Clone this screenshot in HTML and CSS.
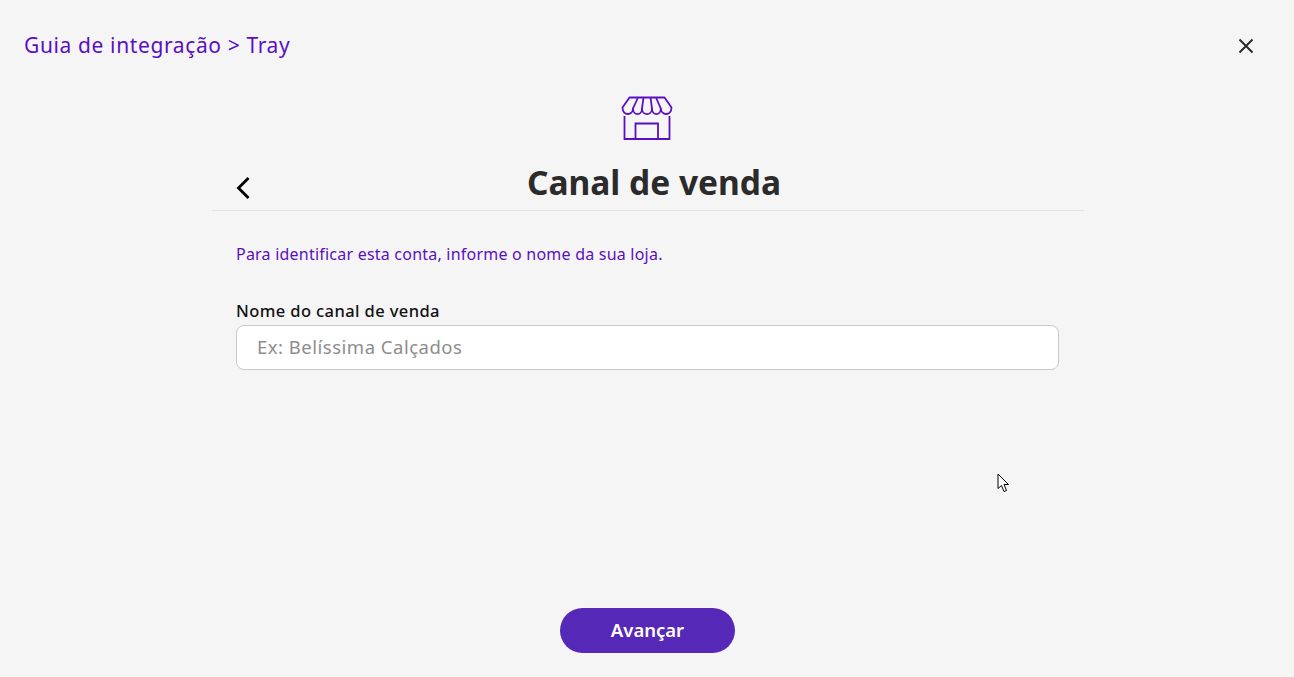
FILE: index.html
```html
<!DOCTYPE html>
<html lang="pt-BR">
<head>
<meta charset="utf-8">
<title>Guia de integração</title>
<link rel="stylesheet" href="styles.css">
</head>
<body>
<div class="page">
  <header class="top">
    <span class="crumb">Guia de integração &gt; Tray</span>
    <button class="close" aria-label="Fechar">
      <svg width="16" height="16" viewBox="0 0 16 16"><path d="M1.5 1.5l13 13M14.5 1.5l-13 13" fill="none" stroke="#2b2b2b" stroke-width="2"/></svg>
    </button>
  </header>
  <main class="panel">
    <div class="store">
      <svg width="52" height="46" viewBox="0 0 52 46" fill="none" stroke="#5a0fc0" stroke-width="1.800">
        <path d="M8.500 1.500H43.500L50.500 11.500C50.500 20 40 20 39.800 12.500C39.800 20 31 20 31 12.500C31 20 21 20 21 12.500C21 20 12 20 12 12.500C12 20 1.500 20 1.500 11.500Z" stroke-linejoin="round"/>
        <path d="M12 12.500L17 1.500M21 12.500L22.500 1.500M31 12.500L29.500 1.500M39.800 12.500L35 1.500"/>
        <path d="M3.500 20V43H48.500V20"/>
        <path d="M14.500 43V27.500H37V43"/>
      </svg>
    </div>
    <div class="title-row">
      <button class="back" aria-label="Voltar">
        <svg width="14" height="24" viewBox="0 0 14 24"><path d="M12.500 2L2.500 12L12.500 22" fill="none" stroke="#000" stroke-width="2.800"/></svg>
      </button>
      <h1>Canal de venda</h1>
    </div>
    <div class="body">
      <p class="intro">Para identificar esta conta, informe o nome da sua loja.</p>
      <label class="label" for="canal">Nome do canal de venda</label>
      <input class="field" id="canal" type="text" placeholder="Ex: Belíssima Calçados">
    </div>
  </main>
  <footer class="actions">
    <button class="next">Avançar</button>
  </footer>
  <svg class="cursor" width="13" height="20" viewBox="0 0 13 20"><path d="M1 1V15.500L4.500 12.500L7 18.500L9.500 17.500L7 11.500H11.500Z" fill="#fff" stroke="#000" stroke-width="1"/></svg>
</div>
</body>
</html>
```
FILE: styles.css
```css
* { box-sizing: border-box; }
html, body { margin: 0; height: 100%; }
body { background: #f5f5f5; font-family: "Noto Sans", "Open Sans", sans-serif; overflow: hidden; }
button { border: 0; background: none; padding: 0; font-family: inherit; cursor: pointer; }
.page { position: relative; height: 677px; display: flex; flex-direction: column; }
.top { display: flex; justify-content: space-between; align-items: center; height: 32px; margin-top: 30px; padding: 0 40px 0 24px; }
.crumb { font-size: 21px; color: #5a0fc0; letter-spacing: 0.62px; margin-bottom: 2px; }
.close { display: flex; margin-bottom: 1px; }
.panel { width: 872px; margin-left: 212px; display: flex; flex-direction: column; flex: 1; }
.store { display: flex; justify-content: center; padding-top: 34px; margin-left: -2px; height: 79px; }
.title-row { position: relative; height: 65px; margin-top: 5px; border-bottom: 1px solid #e2e2e2; display: flex; justify-content: center; align-items: center; }
.back { position: absolute; left: 24px; top: 30px; display: flex; }
.title-row h1 { margin: 8px 0 0 12px; font-size: 33.500px; font-weight: 700; color: #2b2b2b; line-height: 46px; }
.body { padding: 31px 25px 0 24px; display: flex; flex-direction: column; }
.intro { margin: 0 0 33px; font-size: 16px; line-height: 24px; color: #5a0fc0; letter-spacing: 0.22px; }
.label { font-size: 16.500px; line-height: 24px; color: #111; font-weight: 500; margin-bottom: 2px; letter-spacing: 0.4px; }
.field { height: 45px; border: 1px solid #c9c9c9; border-radius: 8px; background: #fff; padding: 0 20px 2px; font-size: 18.500px; font-family: inherit; outline: none; letter-spacing: 0.5px; }
.field::placeholder { color: #8d8d8d; opacity: 1; }
.actions { display: flex; justify-content: center; padding-bottom: 24px; }
.next { width: 175px; height: 45px; border-radius: 23px; background: #5628b8; color: #fff; font-size: 18.500px; font-weight: 600; padding: 0 0 2px 1px; }
.cursor { position: absolute; left: 997px; top: 473px; }
```
